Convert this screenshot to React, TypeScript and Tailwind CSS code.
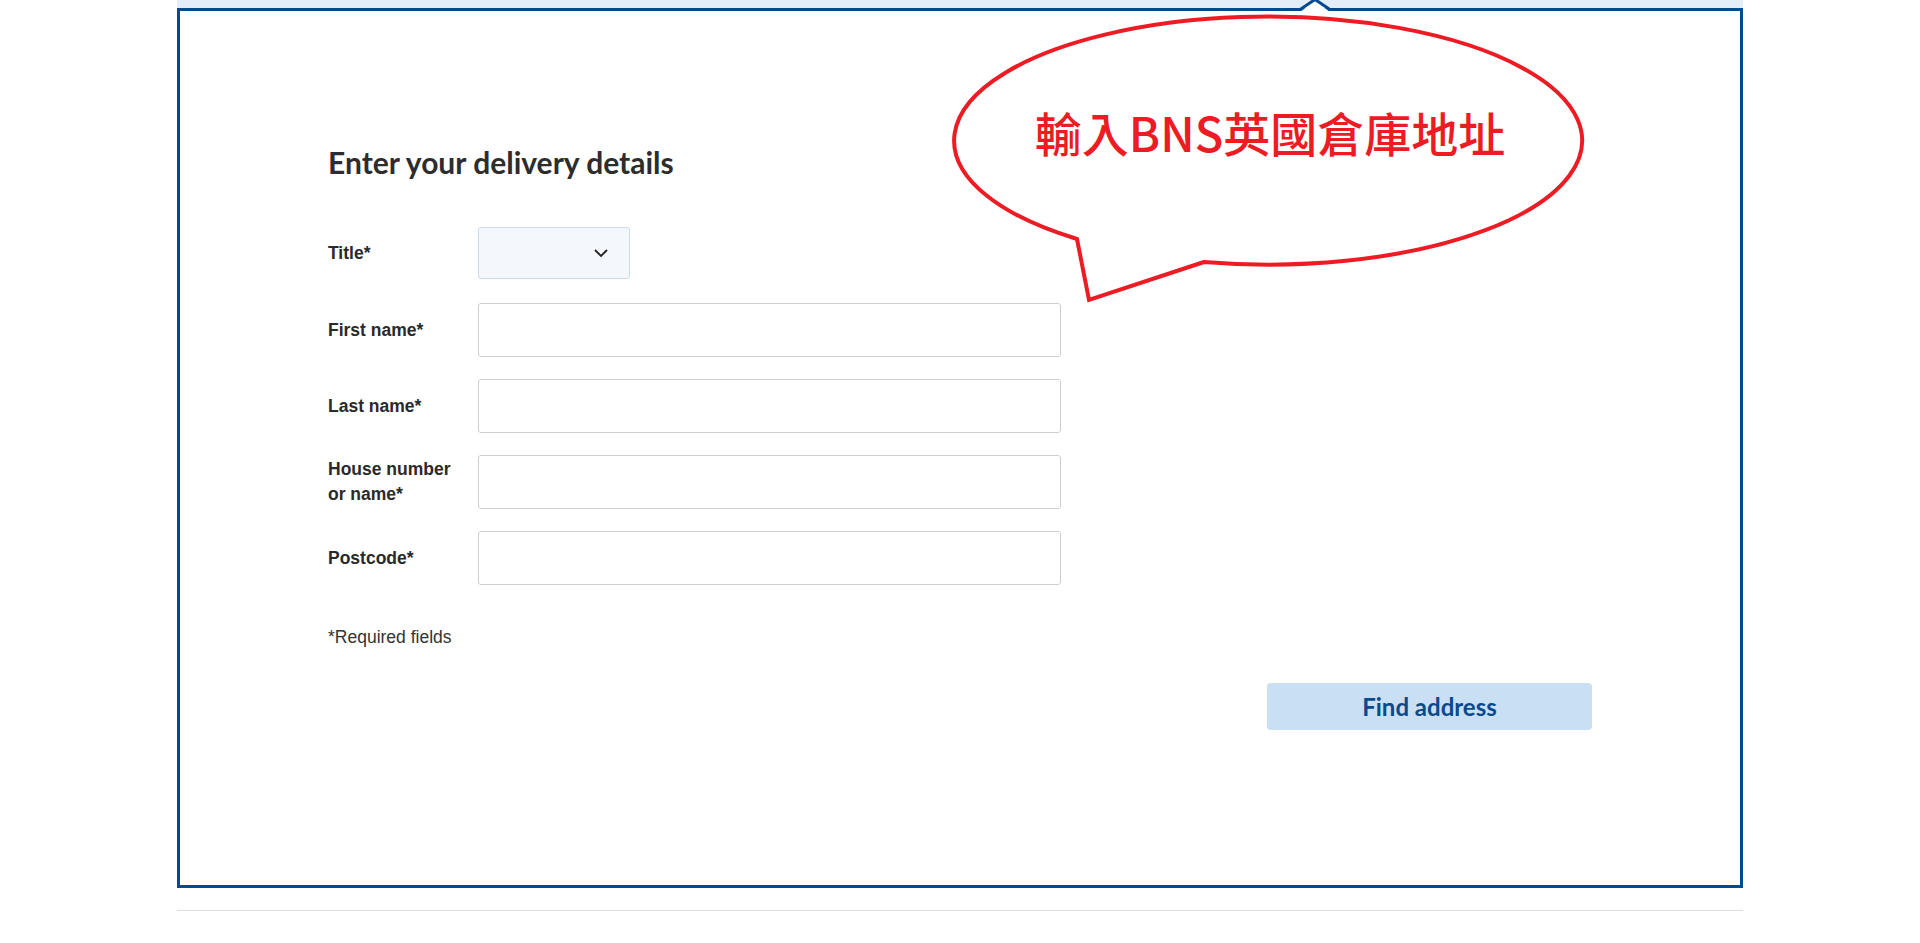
import React from "react";

const labelCls =
  "w-[150px] shrink-0 text-[17.5px] leading-[25px] font-bold text-[#2a2a2a] [font-family:'Liberation_Sans',Arial,sans-serif]";

function InputRow({ label }: { label: React.ReactNode }) {
  return (
    <div className="flex items-center">
      <div className={labelCls}>{label}</div>
      <div className="w-[583px] h-[54px] border border-[#cfcfcf] rounded-[3px] bg-white" />
    </div>
  );
}

export default function App() {
  return (
    <div className="relative min-h-screen bg-white">
      <div className="w-[1566px] mx-auto">
        <div className="h-[8px] bg-[#e4eef8]" />
        <div className="relative border-[3px] border-[#004a8f] pl-[148px] pr-[148px] pt-[133px] pb-[155px]">
          {/* active tab pointer */}
          <svg
            className="absolute top-[-11px] left-[1120px]"
            width="30"
            height="13"
            viewBox="0 0 30 13"
          >
            <polygon points="0,12 15,0.5 30,12" fill="#ffffff" />
            <polyline
              points="0,9.5 15,-0.5 30,9.5"
              fill="none"
              stroke="#004a8f"
              strokeWidth="3"
            />
          </svg>

          <h2 className="text-[30px] leading-[36px] font-bold text-[#2d2d2d] [font-family:Lato,'Open_Sans',sans-serif]">
            Enter your delivery details
          </h2>

          <div className="mt-[47px] flex flex-col gap-[22px]">
            <div className="flex items-center mb-[2px]">
              <div className={labelCls}>Title*</div>
              <div className="w-[152px] h-[52px] border border-[#c9dcef] rounded-[3px] bg-[#f4f8fd] flex items-center justify-end pr-[21px]">
                <svg width="14" height="8" viewBox="0 0 14 8">
                  <polyline
                    points="1,1 7,7 13,1"
                    fill="none"
                    stroke="#222"
                    strokeWidth="1.8"
                  />
                </svg>
              </div>
            </div>
            <InputRow label="First name*" />
            <InputRow label="Last name*" />
            <InputRow
              label={
                <>
                  House number
                  <br />
                  or name*
                </>
              }
            />
            <InputRow label="Postcode*" />
          </div>

          <p className="mt-[40px] text-[17.5px] leading-[24px] text-[#333] [font-family:'Liberation_Sans',Arial,sans-serif]">
            *Required fields
          </p>

          <div className="mt-[34px] flex justify-end">
            <button className="w-[325px] h-[47px] rounded-[4px] bg-[#c8dff4] text-[#0a4a8c] text-[24px] font-bold [font-family:Lato,'Open_Sans',sans-serif]">
              Find address
            </button>
          </div>
        </div>
        <div className="mt-[22px] h-px bg-[#dddddd]" />
      </div>

      {/* annotation speech bubble */}
      <div className="absolute left-[940px] top-[10px] w-[660px] h-[300px]">
        <svg className="absolute inset-0" width="660" height="300" viewBox="0 0 660 300">
          <path
            d="M 264 252 L 149 290 L 137 229 A 314 124 0 1 1 264 252 Z"
            fill="#ffffff"
            stroke="#ed1c24"
            strokeWidth="4"
            strokeLinejoin="miter"
          />
        </svg>
        <div className="absolute left-[0px] top-[94px] w-[660px] text-center text-[47px] leading-[56px] font-medium text-[#ed1c24] [font-family:'Noto_Sans_CJK_TC','Noto_Sans',sans-serif]">
          輸入BNS英國倉庫地址
        </div>
      </div>
    </div>
  );
}
